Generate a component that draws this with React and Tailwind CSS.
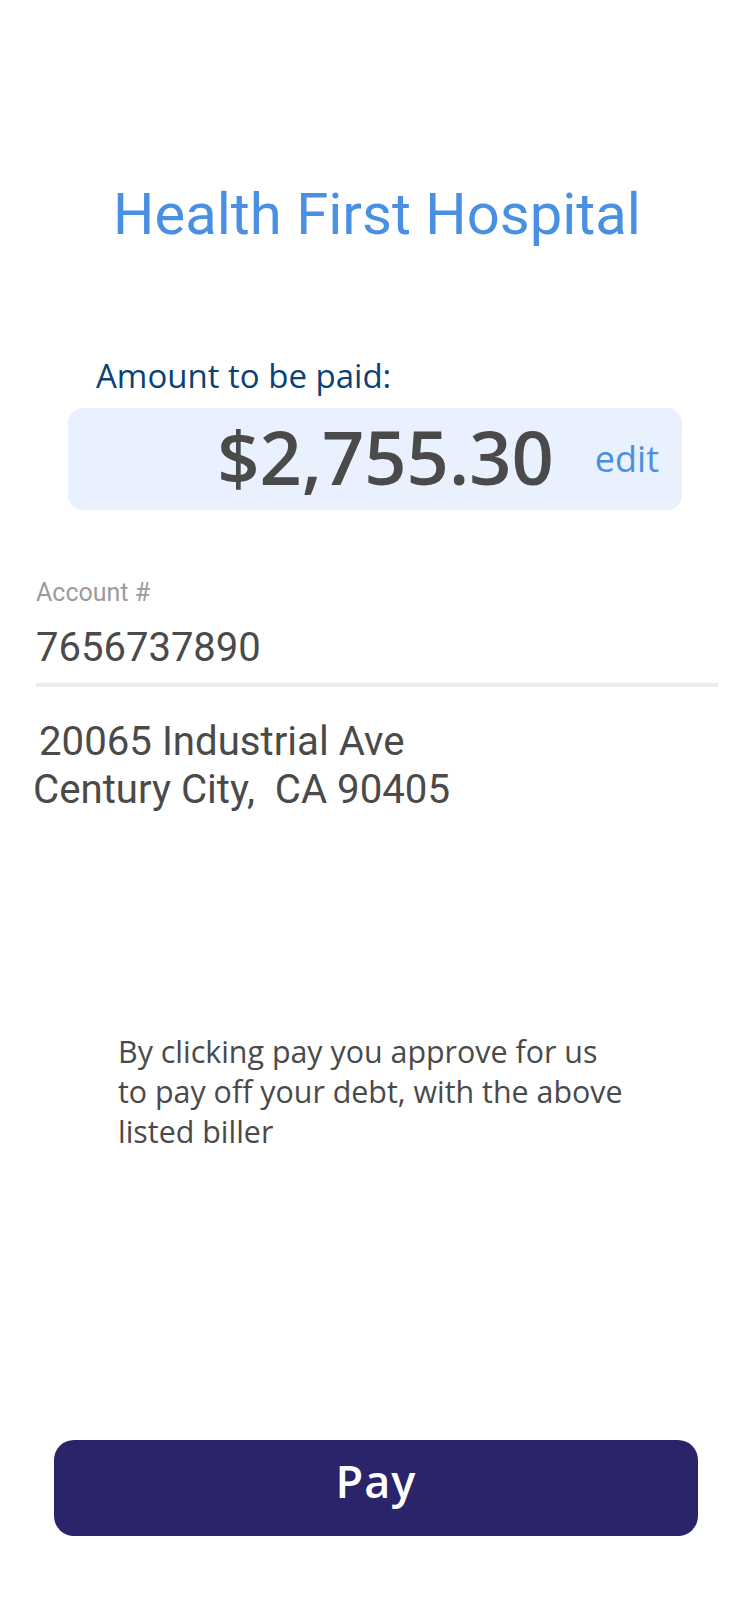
export default function App() {
  return (
    <div className="w-[750px] h-[1624px] bg-white flex flex-col">
      <div
        className="mt-[180px] h-[68px] leading-[68px] text-center text-[58px] text-[#4a90e2] pl-[4px]"
        style={{ fontFamily: 'Roboto, sans-serif' }}
      >
        Health First Hospital
      </div>

      <div
        className="mt-[106px] pl-[96px] h-[44px] leading-[44px] text-[33px] text-[#0b4274]"
        style={{ fontFamily: '"Open Sans", sans-serif' }}
      >
        Amount to be paid:
      </div>

      <div
        className="mt-[10px] ml-[68px] w-[614px] h-[102px] rounded-[15px] bg-[#e8f1fd] flex items-center justify-end pr-[23px]"
        style={{ fontFamily: '"Open Sans", sans-serif' }}
      >
        <span className="text-[74px] font-semibold leading-none text-[#4a4a4a] -mt-[4px]">$2,755.30</span>
        <span className="ml-[41px] text-[36px] leading-none text-[#4a90e2]">edit</span>
      </div>

      <div style={{ fontFamily: 'Roboto, sans-serif' }} className="flex flex-col">
        <div className="mt-[68px] pl-[36px] h-[30px] leading-[30px] text-[25px] text-[#9b9b9b]">Account #</div>
        <div className="mt-[16px] pl-[36px] h-[48px] leading-[48px] text-[40px] text-[#4a4a4a]">7656737890</div>
        <div className="mt-[11px] ml-[36px] w-[682px] h-[4px] bg-[#ebebeb]" />
        <div className="mt-[31px] pl-[39px] h-[48px] leading-[48px] text-[40.2px] text-[#4a4a4a]">20065 Industrial Ave</div>
        <div className="pl-[33px] h-[48px] leading-[48px] text-[40.2px] text-[#4a4a4a] whitespace-pre">Century City,  CA 90405</div>
      </div>

      <div
        className="mt-[218px] pl-[118px] text-[30.4px] leading-[40px] text-[#4a4a4a]"
        style={{ fontFamily: '"Open Sans", sans-serif' }}
      >
        <div>By clicking pay you approve for us</div>
        <div>to pay off your debt, with the above</div>
        <div>listed biller</div>
      </div>

      <div className="mt-auto mb-[88px] ml-[54px] w-[644px]">
        <button
          className="w-full h-[96px] rounded-[20px] bg-[#2a246a] text-white text-[45px] font-semibold tracking-[1px] flex items-center justify-center pb-[14px]"
          style={{ fontFamily: '"Open Sans", sans-serif' }}
        >
          Pay
        </button>
      </div>
    </div>
  );
}
